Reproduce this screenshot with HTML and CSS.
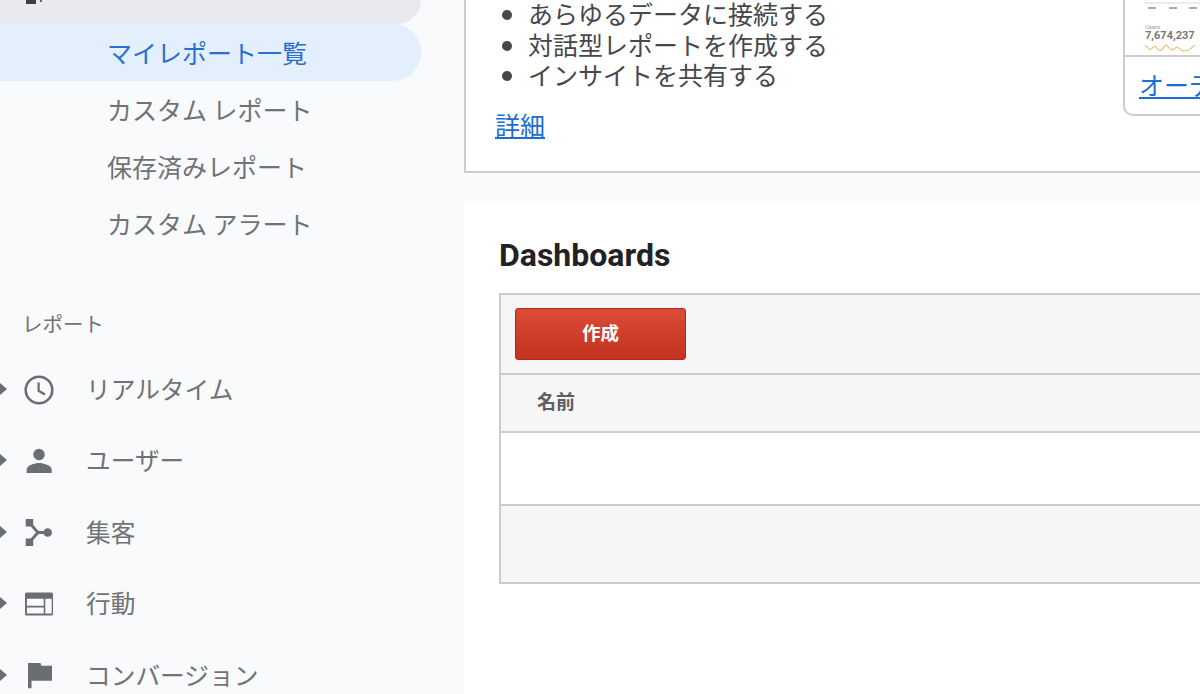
FILE: index.html
```html
<!DOCTYPE html>
<html lang="ja">

<head>
    <meta charset="UTF-8">
    <title>マイレポート一覧</title>
    <link rel="stylesheet" href="styles.css">
</head>

<body>
    <aside class="sidebar">
        <div class="nav-parent">
            <svg class="parent-icon" width="20" height="4" viewBox="0 0 20 4">
                <rect x="0" y="0" width="10" height="4" fill="#3c4043" />
                <rect x="14" y="0" width="2" height="2" fill="#5f6368" />
            </svg>
        </div>
        <a class="nav-item selected">マイレポート一覧</a>
        <a class="nav-item">カスタム レポート</a>
        <a class="nav-item">保存済みレポート</a>
        <a class="nav-item">カスタム アラート</a>

        <div class="nav-label">レポート</div>

        <div class="report-row">
            <span class="caret"></span>
            <svg class="report-icon" viewBox="0 0 30 30">
                <circle cx="15" cy="15" r="13.3" fill="none" stroke="#6a6d71" stroke-width="2.6" />
                <path d="M14.6 7.5v8.3l6.4 3.7" fill="none" stroke="#6a6d71" stroke-width="2.2" />
            </svg>
            <span class="report-name">リアルタイム</span>
        </div>
        <div class="report-row">
            <span class="caret"></span>
            <svg class="report-icon" viewBox="0 0 30 30">
                <circle cx="15" cy="8.500" r="5.700" fill="#6a6d71" />
                <path d="M2.700 27v-3.500c0-4.200 8.100-6.500 12.300-6.500s12.700 2.300 12.700 6.500V27z" fill="#6a6d71" />
            </svg>
            <span class="report-name">ユーザー</span>
        </div>
        <div class="report-row">
            <span class="caret"></span>
            <svg class="report-icon" viewBox="0 0 30 30">
                <rect x="1.700" y="1" width="7.500" height="7.500" fill="#6a6d71" />
                <rect x="1.700" y="20.500" width="7.500" height="7.500" fill="#6a6d71" />
                <circle cx="23.700" cy="14.500" r="4.300" fill="#6a6d71" />
                <path d="M6.500 6l7.500 8.500H22M14 14.500L6.500 23" fill="none" stroke="#6a6d71" stroke-width="2.800" />
            </svg>
            <span class="report-name">集客</span>
        </div>
        <div class="report-row">
            <span class="caret"></span>
            <svg class="report-icon" viewBox="0 0 30 30">
                <path fill-rule="evenodd" fill="#6a6d71"
                    d="M2.500 3.500h25a1.500 1.500 0 0 1 1.500 1.500v20a1.500 1.500 0 0 1-1.500 1.500h-25A1.500 1.500 0 0 1 1 25V5a1.500 1.500 0 0 1 1.500-1.500zM2.900 9.800v7h16.800v-7zM21.300 9.800v14.700h6.400V9.800zM2.900 18.500v6h16.800v-6z" />
            </svg>
            <span class="report-name">行動</span>
        </div>
        <div class="report-row">
            <span class="caret"></span>
            <svg class="report-icon" viewBox="0 0 30 30">
                <path fill="#6a6d71" d="M4 2h12.500l.8 2.700H28v15H7.500v7.500H4z" />
            </svg>
            <span class="report-name">コンバージョン</span>
        </div>
    </aside>

    <main class="content">
        <section class="intro-card">
            <div class="intro-text">
                <ul class="intro-list">
                    <li>あらゆるデータに接続する</li>
                    <li>対話型レポートを作成する</li>
                    <li>インサイトを共有する</li>
                </ul>
                <a class="link detail-link">詳細</a>
            </div>
            <div class="thumb-card">
                <div class="thumb-preview">
                    <svg class="thumb-axis" width="60" height="9" viewBox="0 0 60 9">
                        <path d="M0 0v3h60" fill="none" stroke="#d8d8d8" />
                        <path d="M3 8h8M24 8h8M44 8h8" fill="none" stroke="#aaa" stroke-width="2" />
                    </svg>
                    <div class="thumb-caption">Users</div>
                    <div class="thumb-number">7,674,237</div>
                    <svg class="thumb-wave" width="50" height="8" viewBox="0 0 50 8">
                        <path d="M0 1l5 5 5-4 5 5 6-6 6 5 5-3 6 4 6-1 6-5" fill="none" stroke="#f2c078" stroke-width="1.200" />
                    </svg>
                </div>
                <a class="link thumb-link">オーディエンス</a>
            </div>
        </section>

        <section class="dash-card">
            <h2>Dashboards</h2>
            <div class="dash-table">
                <div class="dash-toolbar"><button class="create-btn">作成</button></div>
                <div class="dash-header">名前</div>
                <div class="dash-row"></div>
                <div class="dash-footer"></div>
            </div>
        </section>
    </main>
</body>

</html>
```

FILE: styles.css
```css
* {
    margin: 0;
    padding: 0;
    box-sizing: border-box;
}

html,
body {
    height: 100%;
    overflow: hidden;
}

body {
    display: flex;
    font-family: "Noto Sans CJK JP", "Noto Sans", sans-serif;
    background: #f9fafc;
    color: #6f7276;
}

/* left nav */
.sidebar {
    width: 464px;
    flex-shrink: 0;
    font-size: 25px;
}

.nav-parent {
    width: 421px;
    height: 24px;
    background: #e8eaed;
    border-bottom-right-radius: 28px;
    padding-left: 26px;
    display: flex;
    align-items: flex-start;
}

.nav-item {
    display: flex;
    align-items: center;
    width: 421px;
    height: 57px;
    padding: 0 0 2px 107px;
    color: #6f7276;
    white-space: nowrap;
}

.nav-item.selected {
    background: #e3effd;
    color: #2a6ed2;
    border-radius: 0 28px 28px 0;
}

.nav-label {
    margin: 56px 0 15px 22px;
    height: 30px;
    line-height: 30px;
    font-size: 20.500px;
    color: #6f7276;
}

.report-row {
    display: flex;
    align-items: center;
    height: 71.500px;
    font-size: 24.700px;
    color: #6f7276;
}

.caret {
    width: 0;
    height: 0;
    border-left: 7px solid #6a6d71;
    border-top: 6px solid transparent;
    border-bottom: 6px solid transparent;
    margin-right: 17px;
}

.report-icon {
    width: 30px;
    height: 30px;
    margin: 2px 32px 0 0;
    flex-shrink: 0;
}

.report-name {
    padding-bottom: 2px;
    white-space: nowrap;
}

/* main column */
.content {
    flex: 1;
    min-width: 0;
    display: flex;
    flex-direction: column;
    gap: 28px;
    overflow: hidden;
}

.link {
    color: #1a6dd6;
    text-decoration: underline;
}

.intro-card {
    display: flex;
    height: 173px;
    background: #fff;
    border-left: 2px solid #ccc;
    border-bottom: 2px solid #ccc;
    padding-left: 29px;
    font-size: 25px;
    color: #45484c;
}

.intro-text {
    width: 628px;
    flex-shrink: 0;
}

.intro-list {
    margin-top: -2px;
    padding-left: 33px;
    line-height: 30.500px;
}

.detail-link {
    display: block;
    margin-top: 19px;
    line-height: 30px;
    width: max-content;
}

.thumb-card {
    width: 200px;
    height: 116px;
    flex-shrink: 0;
    border: 2px solid #ccc;
    border-top: none;
    border-radius: 0 0 10px 10px;
    display: flex;
    flex-direction: column;
}

.thumb-preview {
    height: 57px;
    flex-shrink: 0;
    padding-left: 20px;
    border-bottom: 2px solid #ccc;
    font-family: "Roboto", sans-serif;
}

.thumb-axis {
    display: block;
}

.thumb-caption {
    margin-top: 14px;
    font-size: 6px;
    line-height: 7px;
    color: #999;
}

.thumb-number {
    font-size: 11px;
    line-height: 11px;
    font-weight: 700;
    color: #777;
}

.thumb-wave {
    display: block;
    margin-top: 3px;
}

.thumb-link {
    padding: 11px 0 0 14px;
    line-height: 32px;
    white-space: nowrap;
}

.dash-card {
    flex: 1;
    background: #fff;
    padding: 34px 0 0 35px;
}

.dash-card h2 {
    font-family: "Roboto", sans-serif;
    font-size: 32px;
    font-weight: 700;
    line-height: 40px;
    color: #222;
    margin-bottom: 18px;
}

.dash-table {
    width: 800px;
    border: 2px solid #ccc;
    background: #f6f6f6;
}

.dash-toolbar {
    height: 80px;
    padding: 13px 0 0 14px;
    border-bottom: 2px solid #ccc;
}

.create-btn {
    display: block;
    width: 171px;
    height: 52px;
    padding-bottom: 4px;
    border: 1px solid #b0291a;
    border-radius: 3px;
    background: linear-gradient(#dd4b36, #c13320);
    color: #fff;
    font-family: inherit;
    font-size: 18.500px;
    font-weight: 700;
}

.dash-header {
    height: 58px;
    padding-left: 36px;
    line-height: 52px;
    border-bottom: 2px solid #ccc;
    font-size: 19px;
    font-weight: 700;
    color: #5f5f5f;
}

.dash-row {
    height: 73px;
    background: #fff;
    border-bottom: 2px solid #ccc;
}

.dash-footer {
    height: 76px;
}
```
